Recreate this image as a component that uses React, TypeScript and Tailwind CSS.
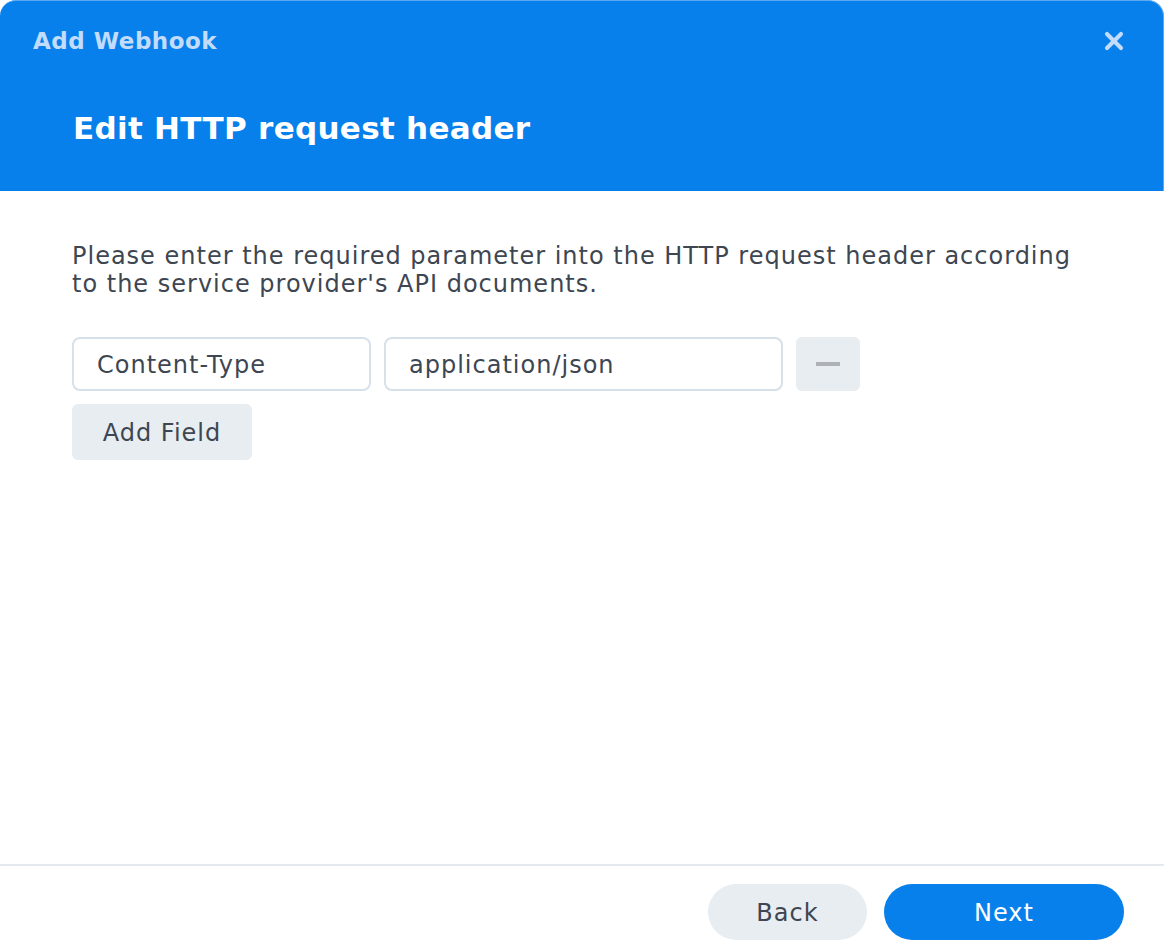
import { X } from 'lucide-react';

export default function App() {
  return (
    <div
      className="w-[1164px] h-[952px] bg-white flex flex-col text-[#3d4651]"
      style={{ fontFamily: '"DejaVu Sans", Verdana, sans-serif' }}
    >
      {/* Header */}
      <div className="h-[191px] shrink-0 bg-[#0780eb] rounded-t-[16px] border-t border-r border-[#5aa9f2] flex flex-col">
        <div className="h-[80px] flex items-center justify-between pl-[33px] pr-[35px]">
          <span className="text-[23px] font-bold tracking-[0.5px] text-[#c4dcfb]">Add Webhook</span>
          <X className="w-[28px] h-[28px] text-[#c4dcfb]" strokeWidth={3.5} />
        </div>
        <div className="pl-[73px] pt-[27px]">
          <h1 className="text-[31px] font-bold tracking-[0.3px] text-white leading-[40px]">Edit HTTP request header</h1>
        </div>
      </div>

      {/* Body */}
      <div className="flex-1 px-[72px] pt-[51px] text-[24px] tracking-[1px]">
        <p className="leading-[28px] text-[#3d4651]">
          Please enter the required parameter into the HTTP request header according to the service provider's API documents.
        </p>

        <div className="mt-[39px] flex items-center gap-[13px]">
          <div className="w-[299px] h-[54px] border-2 border-[#d7e1ea] rounded-[8px] flex items-center pl-[23px] pt-[2px]">
            Content-Type
          </div>
          <div className="w-[399px] h-[54px] border-2 border-[#d7e1ea] rounded-[8px] flex items-center pl-[23px] pt-[2px]">
            application/json
          </div>
          <button className="w-[64px] h-[54px] rounded-[6px] bg-[#e8edf2] flex items-center justify-center">
            <span className="block w-[24px] h-[4px] bg-[#aeb1b6]" />
          </button>
        </div>

        <button className="mt-[13px] w-[180px] h-[56px] rounded-[6px] bg-[#e8edf2] text-[#3d4651] pt-[2px]">
          Add Field
        </button>
      </div>

      {/* Footer */}
      <div className="h-[88px] shrink-0 border-t-2 border-[#e4e9f0] flex items-center justify-end gap-[17px] pr-[40px] pt-[6px] text-[24px] tracking-[1px]">
        <button className="w-[159px] h-[56px] rounded-full bg-[#e8edf2] text-[#3d4651] pt-[2px]">Back</button>
        <button className="w-[240px] h-[56px] rounded-full bg-[#0780eb] text-white pt-[2px]">Next</button>
      </div>
    </div>
  );
}
